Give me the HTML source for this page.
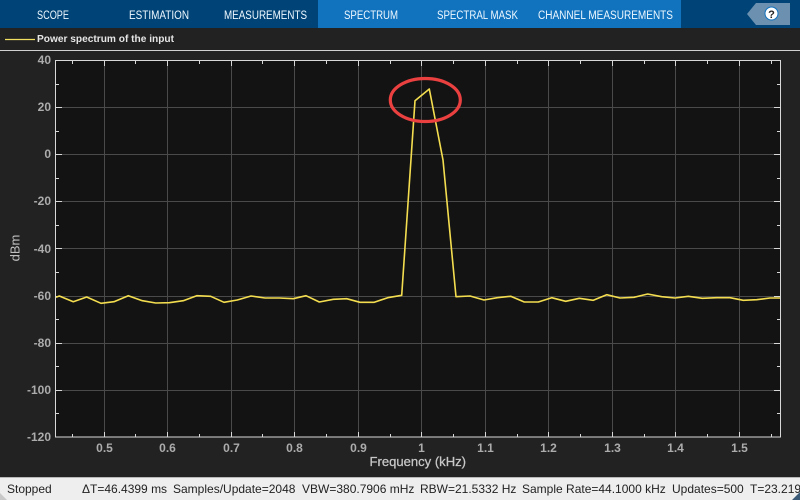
<!DOCTYPE html>
<html><head><meta charset="utf-8"><style>
html,body{margin:0;padding:0;width:800px;height:500px;overflow:hidden;background:#222}
svg{display:block}
text{font-family:"Liberation Sans",sans-serif}
</style></head><body>
<svg width="800" height="500" viewBox="0 0 800 500" xmlns="http://www.w3.org/2000/svg">
<defs><clipPath id="c"><rect x="56" y="61" width="724" height="376"/></clipPath></defs>
<rect width="800" height="500" fill="#222222"/>
<rect width="800" height="28" fill="#004477"/>
<rect x="318" width="363" height="28" fill="#1172be"/>
<g fill="#eef8ff" font-size="11.5">
<text x="37" y="19" textLength="32" lengthAdjust="spacingAndGlyphs">SCOPE</text>
<text x="129" y="19" textLength="60" lengthAdjust="spacingAndGlyphs">ESTIMATION</text>
<text x="224" y="19" textLength="83" lengthAdjust="spacingAndGlyphs">MEASUREMENTS</text>
<text x="344" y="19" textLength="54" lengthAdjust="spacingAndGlyphs">SPECTRUM</text>
<text x="437" y="19" textLength="81" lengthAdjust="spacingAndGlyphs">SPECTRAL MASK</text>
<text x="538" y="19" textLength="135" lengthAdjust="spacingAndGlyphs">CHANNEL MEASUREMENTS</text>
</g>
<path d="M747 14 L756 3 H790 V25 H756 Z" fill="#6c90b0"/>
<circle cx="771.5" cy="13.5" r="6.5" fill="#fff" stroke="#1172be" stroke-width="1"/>
<text x="771.5" y="18" font-size="11" font-weight="bold" fill="#222" text-anchor="middle">?</text>

<line x1="5" y1="39.5" x2="35" y2="39.5" stroke="#f4e060" stroke-width="1.2"/>
<text x="37" y="42" font-size="10.5" font-weight="bold" fill="#e6e6e6" textLength="137" lengthAdjust="spacingAndGlyphs">Power spectrum of the input</text>
<rect y="50" width="800" height="1" fill="#d0d0d0"/>

<rect x="55.5" y="60.5" width="725" height="376.5" fill="#131313"/>
<g stroke="#4a4a4a" stroke-width="1">
<path d="M104.5 61V437M167.5 61V437M231.5 61V437M294.5 61V437M358.5 61V437M421.5 61V437M485.5 61V437M548.5 61V437M612.5 61V437M675.5 61V437M739.5 61V437"/>
<path d="M56 107.5H780M56 154.5H780M56 201.5H780M56 248.5H780M56 296.5H780M56 343.5H780M56 390.5H780"/>
</g>
<g stroke="#d8d8d8" stroke-width="1" fill="none">
<rect x="55.5" y="60.5" width="725" height="376.5"/>
<path d="M104.5 61v5M167.5 61v5M231.5 61v5M294.5 61v5M358.5 61v5M421.5 61v5M485.5 61v5M548.5 61v5M612.5 61v5M675.5 61v5M739.5 61v5"/>
<path d="M104.5 437v-5M167.5 437v-5M231.5 437v-5M294.5 437v-5M358.5 437v-5M421.5 437v-5M485.5 437v-5M548.5 437v-5M612.5 437v-5M675.5 437v-5M739.5 437v-5"/>
<path d="M72.5 61v3M135.5 61v3M199.5 61v3M262.5 61v3M326.5 61v3M390.5 61v3M453.5 61v3M517.5 61v3M580.5 61v3M644.5 61v3M707.5 61v3M771.5 61v3"/>
<path d="M72.5 437v-3M135.5 437v-3M199.5 437v-3M262.5 437v-3M326.5 437v-3M390.5 437v-3M453.5 437v-3M517.5 437v-3M580.5 437v-3M644.5 437v-3M707.5 437v-3M771.5 437v-3"/>
<path d="M56 107.5h6M56 154.5h6M56 201.5h6M56 248.5h6M56 296.5h6M56 343.5h6M56 390.5h6"/>
<path d="M780 107.5h-6M780 154.5h-6M780 201.5h-6M780 248.5h-6M780 296.5h-6M780 343.5h-6M780 390.5h-6"/>
<path d="M56 84.5h3M56 131.5h3M56 178.5h3M56 225.5h3M56 272.5h3M56 319.5h3M56 366.5h3M56 413.5h3"/>
<path d="M780 84.5h-3M780 131.5h-3M780 178.5h-3M780 225.5h-3M780 272.5h-3M780 319.5h-3M780 366.5h-3M780 413.5h-3"/>
</g>

<g font-size="12" font-weight="bold" fill="#acacac" text-anchor="end">
<text x="51" y="64">40</text><text x="51" y="111">20</text><text x="51" y="158">0</text>
<text x="51" y="205">-20</text><text x="51" y="253">-40</text><text x="51" y="300">-60</text>
<text x="51" y="347">-80</text><text x="51" y="394">-100</text><text x="51" y="441">-120</text>
</g>
<g font-size="12" font-weight="bold" fill="#acacac" text-anchor="middle">
<text x="104.5" y="452">0.5</text><text x="167.5" y="452">0.6</text><text x="231.5" y="452">0.7</text>
<text x="294.5" y="452">0.8</text><text x="358.5" y="452">0.9</text><text x="421.5" y="452">1</text>
<text x="485.5" y="452">1.1</text><text x="548.5" y="452">1.2</text><text x="612.5" y="452">1.3</text>
<text x="675.5" y="452">1.4</text><text x="739.5" y="452">1.5</text>
</g>
<text x="369.5" y="466" font-size="13" fill="#c8c8c8" stroke="#c8c8c8" stroke-width="0.25" textLength="96.5" lengthAdjust="spacingAndGlyphs">Frequency (kHz)</text>
<text transform="translate(19.5 248) rotate(-90)" font-size="13" fill="#c0c0c0" text-anchor="middle">dBm</text>

<g clip-path="url(#c)">
<polyline fill="none" stroke="#f4de50" stroke-width="1.6" stroke-linejoin="round" points="56,297.3 59.3,296 73.3,301.7 86.7,297 101,303.3 114,301.7 128.3,295.7 142.3,300.7 155.7,303 169.3,302.7 183.3,300.7 196.7,295.7 210.7,296.3 224,302.3 237.3,300 251,296 265,298 279.3,298 293.3,298.7 306,295.7 319.3,302 333.3,299.3 346.7,298.7 360,302.3 374.3,302.3 387.7,297.7 401.7,295.3 415,100.7 429.3,89 443,160 456,296.7 470,296 484,300 497.3,297.7 510.7,296.3 524.3,302 538.3,302 551.7,297.7 565.7,301.3 579.3,298.3 593.3,300.3 606.7,294.7 620,298 634,297.3 647.7,294 661.7,296.7 675,298 688.3,296.3 702.3,298.3 716.7,297.7 730,297.7 743.3,300.3 756.7,299.7 770,298 781.7,298"/>
</g>
<ellipse cx="425.3" cy="100" rx="35" ry="21.5" fill="none" stroke="#ea4040" stroke-width="3.2"/>

<rect y="477" width="800" height="23" fill="#eeeeee"/>
<rect y="477" width="800" height="1" fill="#b8b8b8"/>
<g font-size="12" fill="#222222">
<text x="7" y="493">Stopped</text>
<text x="82" y="493">ΔT=46.4399 ms</text>
<text x="173" y="493">Samples/Update=2048</text>
<text x="302" y="493">VBW=380.7906 mHz</text>
<text x="420" y="493">RBW=21.5332 Hz</text>
<text x="522" y="493">Sample Rate=44.1000 kHz</text>
<text x="672" y="493">Updates=500</text>
<text x="750" y="493">T=23.2199</text>
</g>
<path d="M0 493 L7 500 H0 Z" fill="#c8c8c8"/>
<path d="M800 492 L792 500 H800 Z" fill="#3a5a78"/>
</svg>
</body></html>
